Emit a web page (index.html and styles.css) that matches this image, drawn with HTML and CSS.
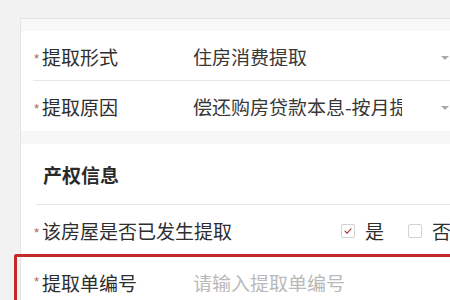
FILE: index.html
```html
<!DOCTYPE html>
<html lang="zh">
<head>
<meta charset="utf-8">
<link rel="stylesheet" href="styles.css">
</head>
<body>
<div class="page">
  <div class="card">
    <div class="band"></div>
    <div class="row divided">
      <span class="req">*</span>
      <span class="label">提取形式</span>
      <span class="value">住房消费提取</span>
      <span class="arrow"></span>
    </div>
    <div class="row">
      <span class="req">*</span>
      <span class="label">提取原因</span>
      <span class="value">偿还购房贷款本息-按月提取</span>
      <span class="arrow"></span>
    </div>
    <div class="band band-lg"></div>
    <div class="section">产权信息</div>
    <div class="row row-check">
      <span class="req">*</span>
      <span class="label label-wide">该房屋是否已发生提取</span>
      <span class="options">
        <span class="box checked">
          <svg viewBox="0 0 14 14" width="14" height="14"><path d="M3.5 7.2 L6 9.6 L10.6 4.6" fill="none" stroke="#b3303a" stroke-width="1.3" stroke-linecap="round" stroke-linejoin="round"/></svg>
        </span>
        <span class="opt">是</span>
        <span class="box"></span>
        <span class="opt">否</span>
      </span>
    </div>
    <div class="row row-focus">
      <span class="req">*</span>
      <span class="label">提取单编号</span>
      <span class="value placeholder">请输入提取单编号</span>
    </div>
  </div>
</div>
</body>
</html>
```

FILE: styles.css
```css
html, body {
  margin: 0;
  padding: 0;
  width: 450px;
  height: 300px;
  overflow: hidden;
  background: #f2f2f2;
  font-family: "Noto Sans CJK SC", "Noto Sans", sans-serif;
  color: #333;
}

.page {
  padding: 18px 0 0 20px;
}

.card {
  background: #fff;
  border-top: 1px solid #e4e4e4;
  border-left: 1px solid #e4e4e4;
  height: 320px;
}

.band {
  height: 12px;
  background: #f8f8f8;
}

.band-lg {
  height: 13px;
  background: #f6f6f6;
}

.row {
  display: flex;
  align-items: center;
  height: 50px;
  padding-left: 11px;
  font-size: 19px;
  line-height: 1;
  position: relative;
}

.row.divided::after {
  content: "";
  position: absolute;
  left: 12px;
  right: 0;
  bottom: 0;
  height: 1px;
  background: #e8e8e8;
}

.req {
  width: 10px;
  flex: none;
  font-family: "Liberation Sans", sans-serif;
  font-size: 13px;
  color: #a8665c;
  position: relative;
  top: 2px;
  padding-left: 2px;
  box-sizing: border-box;
}

.label {
  width: 151px;
  flex: none;
  white-space: nowrap;
  color: #2e2e2e;
}

.label-wide {
  width: 299px;
}

.value {
  width: 209px;
  flex: none;
  overflow: hidden;
  white-space: nowrap;
  color: #383838;
}

.placeholder {
  color: #b9b9b9;
}

.arrow {
  margin-left: auto;
  margin-right: 1px;
  margin-top: 3px;
  width: 0;
  height: 0;
  border-left: 4px solid transparent;
  border-right: 4px solid transparent;
  border-top: 4px solid #a9a9a9;
}

.section {
  height: 60px;
  margin-left: 15px;
  padding-left: 7px;
  border-bottom: 1px solid #e6e6e6;
  display: flex;
  align-items: center;
  font-size: 19px;
  font-weight: bold;
  color: #2a2a2a;
}

.row-check {
  height: 47px;
  padding-top: 2px;
}

.options {
  display: flex;
  align-items: center;
  flex: none;
}

.box {
  width: 14px;
  height: 14px;
  box-sizing: border-box;
  border: 1px solid #d2d2d2;
  border-radius: 2px;
  background: #fff;
  display: flex;
  align-items: center;
  justify-content: center;
  flex: none;
}

.box svg {
  display: block;
}

.opt {
  margin-left: 10px;
  margin-right: 24px;
  color: #2e2e2e;
}

.opt:last-child {
  margin-right: 0;
}

.row-focus {
  margin-left: -7px;
  border: 3px solid #c52a2a;
  border-right: none;
  border-radius: 3px 0 0 0;
  padding-left: 15px;
  align-items: flex-start;
  padding-top: 16px;
  box-sizing: border-box;
  height: 60px;
}
```
